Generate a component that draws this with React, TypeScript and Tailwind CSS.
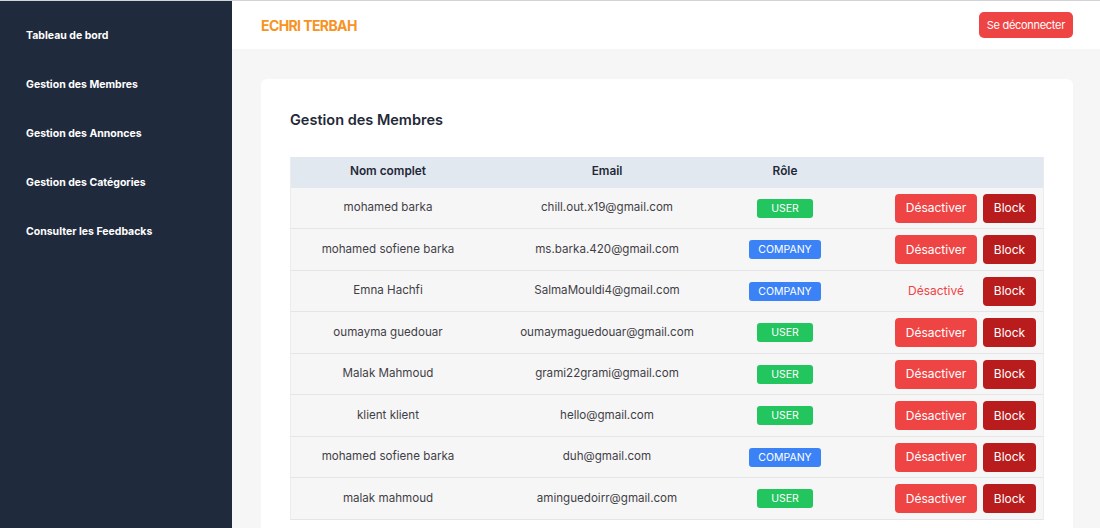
import React from "react";

type Member = {
  name: string;
  email: string;
  role: "USER" | "COMPANY";
  active: boolean;
};

const members: Member[] = [
  { name: "mohamed barka", email: "chill.out.x19@gmail.com", role: "USER", active: true },
  { name: "mohamed sofiene barka", email: "ms.barka.420@gmail.com", role: "COMPANY", active: true },
  { name: "Emna Hachfi", email: "SalmaMouldi4@gmail.com", role: "COMPANY", active: false },
  { name: "oumayma guedouar", email: "oumaymaguedouar@gmail.com", role: "USER", active: true },
  { name: "Malak Mahmoud", email: "grami22grami@gmail.com", role: "USER", active: true },
  { name: "klient klient", email: "hello@gmail.com", role: "USER", active: true },
  { name: "mohamed sofiene barka", email: "duh@gmail.com", role: "COMPANY", active: true },
  { name: "malak mahmoud", email: "aminguedoirr@gmail.com", role: "USER", active: true },
];

const navItems = [
  "Tableau de bord",
  "Gestion des Membres",
  "Gestion des Annonces",
  "Gestion des Catégories",
  "Consulter les Feedbacks",
];

const cols = "grid grid-cols-[194px_244px_112px_1fr] items-center";

const RoleBadge = ({ role }: { role: Member["role"] }) => (
  <span
    className={
      role === "USER"
        ? "rounded-[3px] bg-[#22c55e] px-[14px] py-[2px] text-[10.5px] leading-[15px] text-white"
        : "rounded-[3px] bg-[#3b82f6] px-[9px] py-[2px] text-[10.5px] leading-[15px] text-white"
    }
  >
    {role}
  </span>
);

const MemberRow = ({ member }: { member: Member }) => (
  <div className={`${cols} h-[41.5px] border-b border-[#e5e5e8] bg-[#f7f6f7] text-[11.6px] text-[#3f3f46]`}>
    <div className="text-center">{member.name}</div>
    <div className="text-center">{member.email}</div>
    <div className="flex justify-center">
      <RoleBadge role={member.role} />
    </div>
    <div className="flex items-center justify-end gap-[6px] pr-[7px]">
      {member.active ? (
        <button className="h-[29px] w-[82px] rounded-[4px] bg-[#ef4444] text-[12px] text-white">
          Désactiver
        </button>
      ) : (
        <span className="w-[82px] text-center text-[12px] text-[#ef4444]">Désactivé</span>
      )}
      <button className="h-[29px] w-[53px] rounded-[4px] bg-[#b91c1c] text-[12px] text-white">
        Block
      </button>
    </div>
  </div>
);

export default function App() {
  return (
    <div
      className="flex h-[528px] w-[1100px] overflow-hidden border-t border-[#d4d4d8] bg-[#f7f6f6]"
      style={{ fontFamily: "Inter, 'Noto Sans', sans-serif" }}
    >
      <aside className="flex w-[232px] shrink-0 flex-col gap-[32px] bg-[#1f2a3d] px-[26px] pt-[26px]">
        {navItems.map((item) => (
          <div key={item} className="text-[10.5px] font-bold leading-[17px] text-white">
            {item}
          </div>
        ))}
      </aside>
      <div className="flex flex-1 flex-col">
        <header className="flex h-[48px] shrink-0 items-center justify-between bg-white pl-[29px] pr-[27px]">
          <span className="text-[14px] font-bold tracking-[-0.6px] text-[#f7931e]">
            ECHRI TERBAH
          </span>
          <button className="h-[26px] rounded-[5px] bg-[#ef4444] px-[8px] text-[11px] tracking-[-0.3px] text-white">
            Se déconnecter
          </button>
        </header>
        <main className="shrink-0 pt-[30px] pl-[29px] pr-[27px]">
          <div className="rounded-[6px] bg-white px-[29px] pt-[30px] pb-[20px]">
            <h2 className="text-[14.5px] font-semibold text-[#1f2937]">Gestion des Membres</h2>
            <div className="mt-[26px] border-x border-[#ececef]">
              <div className={`${cols} h-[31px] bg-[#e2e8f0] text-[11.8px] font-semibold text-[#1f2937]`}>
                <div className="text-center">Nom complet</div>
                <div className="text-center">Email</div>
                <div className="text-center">Rôle</div>
                <div />
              </div>
              {members.map((m, i) => (
                <MemberRow key={i} member={m} />
              ))}
            </div>
          </div>
        </main>
      </div>
    </div>
  );
}
